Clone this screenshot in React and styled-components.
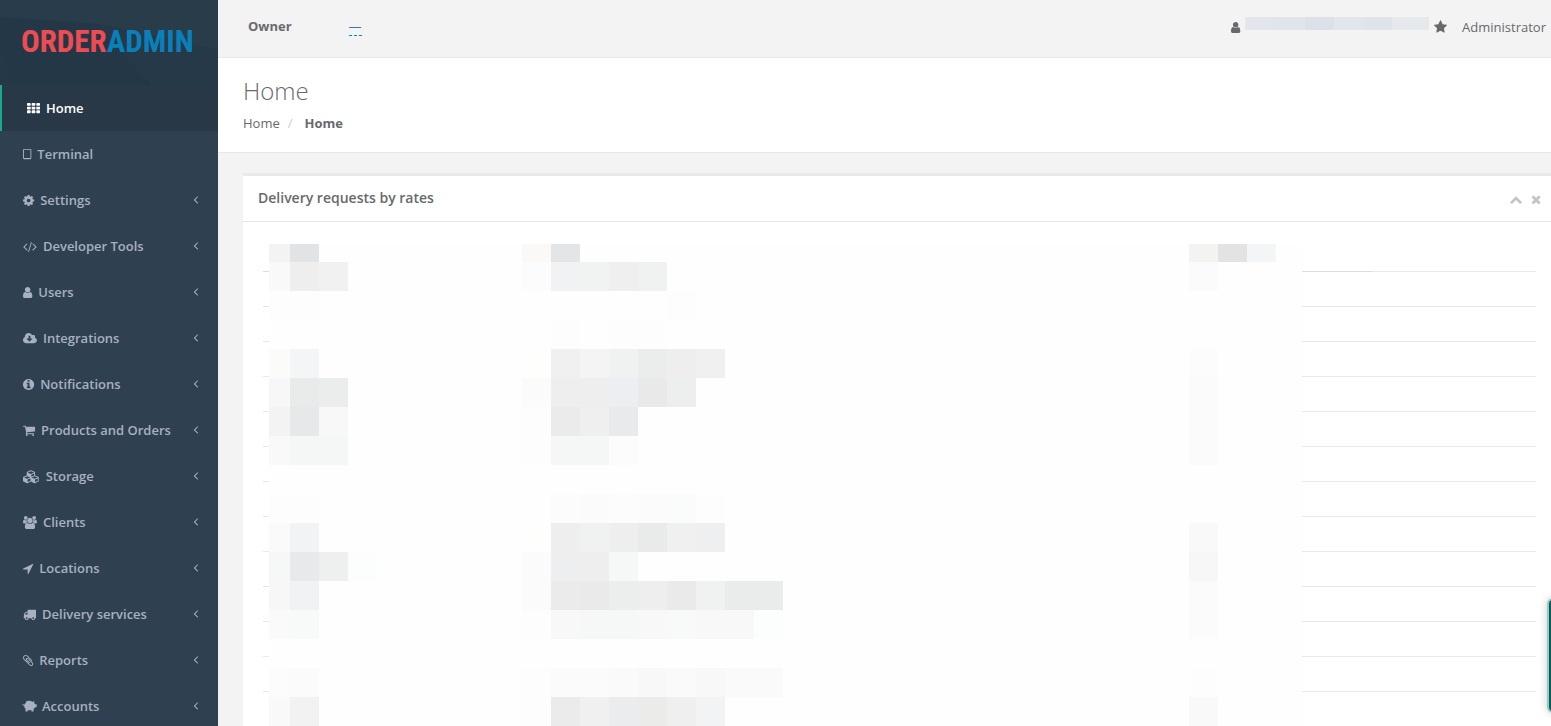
// Importing Packages
import React from "react";
import styled, { createGlobalStyle } from "styled-components";

// Icons: [left edge, width, path] on a 1792 unit high grid
const icons = {
  th: [0, 1792, "M512 1248v192q0 40-28 68t-68 28h-320q-40 0-68-28t-28-68v-192q0-40 28-68t68-28h320q40 0 68 28t28 68zm0-512v192q0 40-28 68t-68 28h-320q-40 0-68-28t-28-68v-192q0-40 28-68t68-28h320q40 0 68 28t28 68zm640 512v192q0 40-28 68t-68 28h-320q-40 0-68-28t-28-68v-192q0-40 28-68t68-28h320q40 0 68 28t28 68zm-640-1024v192q0 40-28 68t-68 28h-320q-40 0-68-28t-28-68v-192q0-40 28-68t68-28h320q40 0 68 28t28 68zm640 512v192q0 40-28 68t-68 28h-320q-40 0-68-28t-28-68v-192q0-40 28-68t68-28h320q40 0 68 28t28 68zm640 512v192q0 40-28 68t-68 28h-320q-40 0-68-28t-28-68v-192q0-40 28-68t68-28h320q40 0 68 28t28 68zm-640-1024v192q0 40-28 68t-68 28h-320q-40 0-68-28t-28-68v-192q0-40 28-68t68-28h320q40 0 68 28t28 68zm640 512v192q0 40-28 68t-68 28h-320q-40 0-68-28t-28-68v-192q0-40 28-68t68-28h320q40 0 68 28t28 68zm0-512v192q0 40-28 68t-68 28h-320q-40 0-68-28t-28-68v-192q0-40 28-68t68-28h320q40 0 68 28t28 68z"],
  tablet: [320, 1152, "M1344 1360v-1072q0-13-9.5-22.5t-22.5-9.5h-832q-13 0-22.5 9.5t-9.5 22.5v1072q0 13 9.5 22.5t22.5 9.5h832q13 0 22.5-9.5t9.5-22.5zm128-1072v1088q0 66-47 113t-113 47h-832q-66 0-113-47t-47-113v-1088q0-66 47-113t113-47h832q66 0 113 47t47 113z"],
  cog: [128, 1536, "M1152 896q0-106-75-181t-181-75-181 75-75 181 75 181 181 75 181-75 75-181zm512-109v222q0 12-8 23t-20 13l-185 28q-19 54-39 91 35 50 107 138 10 12 10 25t-9 23q-27 37-99 108t-94 71q-12 0-26-9l-138-108q-44 23-91 38-16 136-29 186-7 28-36 28h-222q-14 0-24.5-8.5t-11.5-21.5l-28-184q-49-16-90-37l-141 107q-10 9-25 9-14 0-25-11-126-114-165-168-7-10-7-23 0-12 8-23 15-21 51-66.5t54-70.5q-27-50-41-99l-183-27q-13-2-21-12.5t-8-23.5v-222q0-12 8-23t19-13l186-28q14-46 39-92-40-57-107-138-10-12-10-24 0-10 9-23 26-36 98.5-107.5t94.5-71.5q13 0 26 10l138 107q44-23 91-38 16-136 29-186 7-28 36-28h222q14 0 24.5 8.5t11.5 21.5l28 184q49 16 90 37l142-107q9-9 24-9 13 0 25 10 129 119 165 170 7 8 7 22 0 12-8 23-15 21-51 66.5t-54 70.5q26 50 41 98l183 28q13 2 21 12.5t8 23.5z"],
  code: [-64, 1920, "M553 1399l-50 50q-10 10-23 10t-23-10l-466-466q-10-10-10-23t10-23l466-466q10-10 23-10t23 10l50 50q10 10 10 23t-10 23l-393 393 393 393q10 10 10 23t-10 23zm591-1067l-373 1291q-4 13-15.5 19.5t-23.5 2.5l-62-17q-13-4-19.5-15.5t-2.5-24.5l373-1291q4-13 15.5-19.5t23.5-2.5l62 17q13 4 19.5 15.5t2.5 24.5zm657 651l-466 466q-10 10-23 10t-23-10l-50-50q-10-10-10-23t10-23l393-393-393-393q-10-10-10-23t10-23l50-50q10-10 23-10t23 10l466 466q10 10 10 23t-10 23z"],
  user: [256, 1280, "M1536 1399q0 109-62.5 187t-150.5 78h-854q-88 0-150.5-78t-62.5-187q0-85 8.5-160.5t31.5-152 58.5-131 94-89 134.5-34.5q131 128 313 128t313-128q76 0 134.5 34.5t94 89 58.5 131 31.5 152 8.5 160.5zm-256-887q0 159-112.5 271.5t-271.5 112.5-271.5-112.5-112.5-271.5 112.5-271.5 271.5-112.5 271.5 112.5 112.5 271.5z"],
  cloud: [-64, 1920, "M1216 928q0-14-9-23t-23-9h-224v-352q0-13-9.5-22.5t-22.5-9.5h-192q-13 0-22.5 9.5t-9.5 22.5v352h-224q-13 0-22.5 9.5t-9.5 22.5q0 14 9 23l352 352q9 9 23 9t23-9l351-351q10-12 10-24zm640 224q0 159-112.5 271.5t-271.5 112.5h-1088q-185 0-316.5-131.5t-131.5-316.5q0-130 70-240t188-165q-2-30-2-43 0-212 150-362t362-150q156 0 285.5 87t188.5 231q71-62 166-62 106 0 181 75t75 181q0 76-41 138 130 31 213.5 135.5t83.5 238.5z"],
  info: [128, 1536, "M1152 1376v-160q0-14-9-23t-23-9h-96v-512q0-14-9-23t-23-9h-320q-14 0-23 9t-9 23v160q0 14 9 23t23 9h96v320h-96q-14 0-23 9t-9 23v160q0 14 9 23t23 9h448q14 0 23-9t9-23zm-128-896v-160q0-14-9-23t-23-9h-192q-14 0-23 9t-9 23v160q0 14 9 23t23 9h192q14 0 23-9t9-23zm640 416q0 209-103 385.5t-279.5 279.5-385.5 103-385.5-103-279.5-279.5-103-385.5 103-385.5 279.5-279.5 385.5-103 385.5 103 279.5 279.5 103 385.5z"],
  cart: [64, 1664, "M704 1536q0 52-38 90t-90 38-90-38-38-90 38-90 90-38 90 38 38 90zm896 0q0 52-38 90t-90 38-90-38-38-90 38-90 90-38 90 38 38 90zm128-1088v512q0 24-16.5 42.5t-40.5 21.5l-1044 122q13 60 13 70 0 16-24 64h920q26 0 45 19t19 45-19 45-45 19h-1024q-26 0-45-19t-19-45q0-11 8-31.5t16-36 21.5-40 15.5-29.5l-177-823h-204q-26 0-45-19t-19-45 19-45 45-19h256q16 0 28.5 6.5t19.5 15.5 13 24.5 8 26 5.5 29.5 4.5 26h1201q26 0 45 19t19 45z"],
  cubes: [-128, 2304, "M512 1664l384-192v-314l-384 164v342zm-64-454l404-173-404-173-404 173zm1088 454l384-192v-314l-384 164v342zm-64-454l404-173-404-173-404 173zm-448-293l384-165v-266l-384 164v267zm-64-379l441-189-441-189-441 189zm1088 518v416q0 36-19 67t-52 47l-448 224q-25 14-57 14t-57-14l-448-224q-4-2-7-4-2 2-7 4l-448 224q-25 14-57 14t-57-14l-448-224q-33-16-52-47t-19-67v-416q0-38 21.5-70t56.5-48l434-186v-400q0-38 21.5-70t56.5-48l448-192q23-10 50-10t50 10l448 192q35 16 56.5 48t21.5 70v400l434 186q36 16 57 48t21 70z"],
  users: [0, 1920, "M593 896q-162 5-265 128h-134q-82 0-138-40.5t-56-118.5q0-353 124-353 6 0 43.5 21t97.5 42.5 119 21.5q67 0 133-23-5 37-5 66 0 139 81 256zm1071 637q0 120-73 189.5t-194 69.5h-874q-121 0-194-69.5t-73-189.5q0-53 3.5-103.5t14-109 26.5-108.5 43-97.5 62-81 85.5-53.5 111.5-20q10 0 43 21.5t73 48 107 48 135 21.5 135-21.5 107-48 73-48 43-21.5q61 0 111.5 20t85.5 53.5 62 81 43 97.5 26.5 108.5 14 109 3.5 103.5zm-1024-1277q0 106-75 181t-181 75-181-75-75-181 75-181 181-75 181 75 75 181zm704 384q0 159-112.5 271.5t-271.5 112.5-271.5-112.5-112.5-271.5 112.5-271.5 271.5-112.5 271.5 112.5 112.5 271.5zm576 225q0 78-56 118.5t-138 40.5h-134q-103-123-265-128 81-117 81-256 0-29-5-66 66 23 133 23 59 0 119-21.5t97.5-42.5 43.5-21q124 0 124 353zm-128-609q0 106-75 181t-181 75-181-75-75-181 75-181 181-75 181 75 75 181z"],
  location: [192, 1408, "M1593 349l-640 1280q-17 35-57 35-5 0-15-2-22-5-35.5-22.5t-13.5-39.5v-576h-576q-22 0-39.5-13.5t-22.5-35.5 4-42 29-30l1280-640q13-7 29-7 27 0 45 19 15 14 18.5 34.5t-6.5 39.5z"],
  truck: [0, 1792, "M640 1408q0-52-38-90t-90-38-90 38-38 90 38 90 90 38 90-38 38-90zm-384-512h384v-256h-158q-13 0-22 9l-195 195q-9 9-9 22v30zm1280 512q0-52-38-90t-90-38-90 38-38 90 38 90 90 38 90-38 38-90zm256-1088v1024q0 15-4 26.5t-13.5 18.5-16.5 11.5-23.5 6-22.5 2-25.5 0-22.5-.5q0 106-75 181t-181 75-181-75-75-181h-384q0 106-75 181t-181 75-181-75-75-181h-64q-3 0-22.5.5t-25.5 0-22.5-2-23.5-6-16.5-11.5-13.5-18.5-4-26.5q0-26 19-45t45-19v-320q0-8-.5-35t0-38 2.5-34.5 6.5-37 14-30.5 22.5-30l198-198q19-19 50.5-32t58.5-13h160v-192q0-26 19-45t45-19h1024q26 0 45 19t19 45z"],
  paperclip: [192, 1408, "M1596 1385q0 117-79 196t-196 79q-135 0-235-100l-777-776q-113-115-113-271 0-159 110-270t269-111q158 0 273 113l605 606q10 10 10 22 0 16-30.5 46.5t-46.5 30.5q-13 0-23-10l-606-607q-79-77-181-77-106 0-179 75t-73 181q0 105 76 181l776 777q63 63 145 63 64 0 106-42t42-106q0-82-63-145l-581-581q-26-24-60-24-29 0-48 19t-19 48q0 32 25 59l410 410q10 10 10 22 0 16-31 47t-47 31q-12 0-22-10l-410-410q-63-61-63-149 0-82 57-139t139-57q88 0 149 63l581 581q100 98 100 235z"],
  piggy: [0, 1792, "M-60 520Q60 660 190 650Q250 440 440 330L380 190Q640 70 960 90Q1180 110 1320 260Q1420 150 1560 140L1530 390Q1620 480 1660 590L1890 580V980L1680 1010Q1600 1150 1460 1240V1600H1160V1380Q880 1430 640 1370V1600H340V1220Q190 1090 160 820Q0 800-100 580Z"],
  angleLeft: [640, 640, "M1203 544q0 13-10 23l-393 393 393 393q10 10 10 23t-10 23l-50 50q-10 10-23 10t-23-10l-466-466q-10-10-10-23t10-23l466-466q10-10 23-10t23 10l50 50q10 10 10 23z"],
  star: [64, 1664, "M1728 647q0 22-26 48l-363 354 86 500q1 7 1 20 0 21-10.5 35.5t-30.5 14.5q-19 0-40-12l-449-236-449 236q-22 12-40 12-21 0-31.5-14.5t-10.5-35.5q0-6 2-20l86-500-364-354q-25-27-25-48 0-37 56-46l502-73 225-455q19-41 49-41t49 41l225 455 502 73q56 9 56 46z"],
  chevronUp: [64, 1664, "M1683 1331l-166 165q-19 19-45 19t-45-19l-531-531-531 531q-19 19-45 19t-45-19l-166-165q-19-19-19-45.5t19-45.5l742-741q19-19 45-19t45 19l742 741q19 19 19 45.5t-19 45.5z"],
  times: [192, 1408, "M1490 1322q0 40-28 68l-136 136q-28 28-68 28t-68-28l-294-294-294 294q-28 28-68 28t-68-28l-136-136q-28-28-28-68t28-68l294-294-294-294q-28-28-28-68t28-68l136-136q28-28 68-28t68 28l294 294 294-294q28-28 68-28t68 28l136 136q28 28 28 68t-28 68l-294 294 294 294q28 28 28 68z"],
};

// Data
const menu = [
  { label: "Home", icon: "th", active: true },
  { label: "Terminal", icon: "tablet" },
  { label: "Settings", icon: "cog", nested: true },
  { label: "Developer Tools", icon: "code", nested: true },
  { label: "Users", icon: "user", nested: true },
  { label: "Integrations", icon: "cloud", nested: true },
  { label: "Notifications", icon: "info", nested: true },
  { label: "Products and Orders", icon: "cart", nested: true },
  { label: "Storage", icon: "cubes", nested: true },
  { label: "Clients", icon: "users", nested: true },
  { label: "Locations", icon: "location", nested: true },
  { label: "Delivery services", icon: "truck", nested: true },
  { label: "Reports", icon: "paperclip", nested: true },
  { label: "Accounts", icon: "piggy", nested: true },
];

// Masked table data, one line per row: { first column: colours that follow }
const maskRows = [
  { 0: "f3f3f3 e2e3e5", 9: "faf9f7 e3e5e6", 32: "f3f3f1 e3e3e3 f3f5f7" },
  { 0: "f9f9f9 eeeeee f1f1f1", 9: "fcfcfd f0f2f3 f1f3f2 f0efef f0f2f1", 32: "fbfbfb" },
  { 0: "fdfdfd fdfdfd", 14: "fdfdfd" },
  { 10: "fdfdfd", 12: "fdfdfd fdfdfd" },
  { 0: "fbfbf9 f3f5f7", 9: "fefefc f0f0f0 f4f4f4 f0f2f1 ebedec eeeeee f0f0f0", 32: "fcfcfc" },
  { 0: "f6f7f6 e9ebea ebedec", 9: "fbfbfb eeeeee eeeeee edeef1 e9e9e9 edefee", 32: "fbfbfb" },
  { 0: "f3f3f3 e7e8ea f8f8f8", 9: "fdfdfd ebebeb eeefee e9eaec", 32: "fbfbfb" },
  { 0: "f8f9f8 f5f7f6 f5f7f6", 9: "fdfdfd f5f7f6 f5f7f6 fcfcfc", 32: "fbfbfb" },
  {},
  { 0: "fdfdfd fdfdfd", 10: "fcfcfc fbfbfb fcfcfc fbfbfb fafcfb fdfdfd" },
  { 0: "fafafa f1f3f5", 9: "fefefc eeeeee f0f2f1 eeeeee e9ebea f0f0f0 eeeff1", 32: "f9f9f9" },
  { 0: "f6f8f7 e8e9eb eef0ef fcfefe", 9: "fbfbfc edeef0 eeeeee f6f8f7", 32: "f7f7f7" },
  { 0: "f7f7f7 f0f2f4", 9: "fbfbfb ebebeb eaeaea eceeed eeeeee eaeaea f0f2f1 eaeceb eaeceb", 32: "fbfbfb" },
  { 0: "fafafa f8faf9", 9: "fdfdfd f8f8f8 f6f8f7 f6f8f7 f8f8f8 f8faf9 f8f8f8 f8f8f8 fcfefd", 32: "fbfbfb" },
  {},
  { 0: "fcfcfc fbfbfb", 9: "fdfdfd fbfbfb fbfbfb fafafa f8f8f8 fafafa f8f8f8 fafafa fafafa", 32: "fdfdfd" },
  { 0: "f9f9f9 f2f2f2", 9: "fdfdfd ebebeb f0f0f0 ebecee ebebe9 efefef f1f3f5", 32: "f9f9f9" },
];

const Icon = ({ name, size = 13 }) => {
  const [left, width, path] = icons[name];
  return (
    <StyledIcon
      aria-hidden="true"
      viewBox={`${left} 0 ${width} 1792`}
      width={(width / 1792) * size}
      height={size}
    >
      <path d={path} />
    </StyledIcon>
  );
};

const DataMask = () => (
  <StyledMask aria-hidden="true">
    <svg width="1033" height="482" shapeRendering="crispEdges">
      {maskRows.map((runs, row) =>
        Object.entries(runs).map(([start, colors]) =>
          colors.split(" ").map((color, i) => {
            const col = Number(start) + i;
            return (
              <rect
                key={`${row}-${col}`}
                x={col === 0 ? 0 : 21 + (col - 1) * 29}
                y={row === 0 ? 0 : 18 + (row - 1) * 29}
                width={col === 0 ? 21 : 29}
                height={row === 0 ? 18 : 29}
                fill={`#${color}`}
              />
            );
          })
        )
      )}
    </svg>
  </StyledMask>
);

const Sidebar = () => (
  <StyledSidebar>
    <StyledBrand href="#home">
      {/* Faceted backdrop behind the logo */}
      <svg viewBox="0 0 218 85" preserveAspectRatio="none" aria-hidden="true">
        <rect width="218" height="85" fill="#253847" />
        <path d="M0 0H126L98 24L0 17Z" fill="#283c4b" />
        <path d="M126 0H218V50L98 24Z" fill="#283c4a" />
        <path d="M98 24L150 85H12L0 40V17Z" fill="#243746" />
        <path d="M98 24L218 50V85H150Z" fill="#263948" />
      </svg>
      <StyledLogo>
        ORDER<span>ADMIN</span>
      </StyledLogo>
    </StyledBrand>
    <StyledMenu>
      {menu.map(({ label, icon, active, nested }) => (
        <li key={label}>
          <StyledMenuLink href="#menu" $active={active}>
            <Icon name={icon} />
            <span>{label}</span>
            {nested && (
              <StyledArrow>
                <Icon name="angleLeft" />
              </StyledArrow>
            )}
          </StyledMenuLink>
        </li>
      ))}
    </StyledMenu>
  </StyledSidebar>
);

const App = () => {
  return (
    <StyledPage>
      <GlobalStyle />
      <Sidebar />
      <StyledMain>
        <StyledTopbar>
          <StyledOwner>
            <strong>Owner</strong>
            <a href="#owner">—</a>
          </StyledOwner>
          <StyledAccount>
            <Icon name="user" />
            <StyledNameMask aria-hidden="true" />
            <Icon name="star" size={14} />
            <span>Administrator</span>
          </StyledAccount>
        </StyledTopbar>

        <StyledHeading>
          <h2>Home</h2>
          <ol>
            <li>
              <a href="#home">Home</a>
            </li>
            <li>
              <strong>Home</strong>
            </li>
          </ol>
        </StyledHeading>

        <StyledCard>
          <StyledCardTitle>
            <h5>Delivery requests by rates</h5>
            <StyledTools>
              <button type="button" aria-label="Collapse">
                <Icon name="chevronUp" />
              </button>
              <button type="button" aria-label="Close">
                <Icon name="times" />
              </button>
            </StyledTools>
          </StyledCardTitle>
          <StyledCardBody>
            <StyledTableWrap>
              <StyledTable>
                <thead>
                  <tr>
                    <th />
                    <th />
                    <th />
                    <td />
                  </tr>
                </thead>
                <tbody>
                  {Array.from({ length: 13 }, (_, i) => (
                    <tr key={i}>
                      <td />
                      <td />
                      <td />
                      <td />
                    </tr>
                  ))}
                </tbody>
              </StyledTable>
              <DataMask />
            </StyledTableWrap>
          </StyledCardBody>
        </StyledCard>
      </StyledMain>
      <StyledSideTab type="button" aria-label="Open chat" />
    </StyledPage>
  );
};

export default App;

const GlobalStyle = createGlobalStyle`
  * {
    box-sizing: border-box;
  }

  body {
    margin: 0;
    background: #f3f3f3;
    color: #676a6c;
    font-family: "Open Sans", "Noto Sans", sans-serif;
    font-size: 13px;
    line-height: 18px;
  }

  a {
    color: inherit;
    text-decoration: none;
  }
`;

const StyledPage = styled.div`
  display: flex;
  height: 100vh;
  overflow: hidden;
`;

const StyledIcon = styled.svg`
  flex: none;
  fill: currentColor;
  overflow: visible;
`;

const StyledSidebar = styled.nav`
  flex: none;
  width: 218px;
  background: #2f4050;
`;

const StyledBrand = styled.a`
  display: grid;
  height: 85px;
  align-items: center;

  > * {
    grid-area: 1 / 1;
  }

  svg {
    width: 100%;
    height: 100%;
  }
`;

const StyledLogo = styled.span`
  padding: 0 0 2px 21px;
  color: #ee4c55;
  font-family: "Roboto Condensed", Roboto, sans-serif;
  font-size: 31px;
  font-weight: 700;
  line-height: 36px;
  z-index: 1;

  span {
    color: #0980ba;
  }
`;

const StyledMenu = styled.ul`
  margin: 0;
  padding: 0;
  list-style: none;
`;

const StyledMenuLink = styled.a`
  display: flex;
  align-items: center;
  gap: 6px;
  height: 46px;
  padding: 0 19px 0 ${({ $active }) => ($active ? 25 : 23)}px;
  border-left: ${({ $active }) => ($active ? "2px solid #19aa8d" : "none")};
  background: ${({ $active }) => ($active ? "#293846" : "transparent")};
  color: ${({ $active }) => ($active ? "#fff" : "#a7b1c2")};
  font-weight: 600;
`;

const StyledArrow = styled.i`
  display: flex;
  margin-left: auto;
  padding-bottom: 2px;
`;

const StyledMain = styled.main`
  flex: 1;
  min-width: 0;
`;

const StyledTopbar = styled.header`
  display: flex;
  justify-content: space-between;
  height: 58px;
  padding: 17px 5px 0 30px;
  border-bottom: 1px solid #e7e7e7;
  background: #f3f3f3;
`;

const StyledOwner = styled.div`
  display: flex;
  align-items: flex-start;
  gap: 57px;

  a {
    border-bottom: 1px dashed #08c;
    color: #337ab7;
  }
`;

const StyledAccount = styled.div`
  display: flex;
  align-items: center;
  align-self: flex-start;
  gap: 5px;
  height: 20px;

  span {
    margin-left: 10px;
  }
`;

const StyledNameMask = styled.div`
  align-self: flex-start;
  width: 184px;
  height: 13px;
  background: linear-gradient(
    to right,
    #e7e8e8 2px,
    #e2e5eb 2px 31px,
    #e0e4eb 31px 60px,
    #dbe0e9 60px 89px,
    #e1e5ec 89px 118px,
    #dfe4eb 118px 147px,
    #e5e8ed 147px 176px,
    #e7e8e8 176px
  );
`;

const StyledHeading = styled.section`
  height: 95px;
  padding: 19px 25px 0;
  border-bottom: 1px solid #e7e7e7;
  background: #fff;

  h2 {
    margin: 0 0 10px;
    font-size: 24px;
    font-weight: 300;
    line-height: 27px;
  }

  ol {
    display: flex;
    margin: 0;
    padding: 0;
    list-style: none;
  }

  li + li::before {
    content: "/";
    padding: 0 12px 0 8px;
    color: #ccc;
  }
`;

const StyledCard = styled.section`
  margin: 20px 0 0 25px;
  border-top: 3px solid #e7eaec;
  background: #fff;
`;

const StyledCardTitle = styled.div`
  display: flex;
  align-items: center;
  justify-content: space-between;
  height: 46px;
  padding: 0 10px 2px 15px;
  border-bottom: 1px solid #e7eaec;

  h5 {
    margin: 0;
    font-size: 14px;
    font-weight: 600;
  }
`;

const StyledTools = styled.div`
  display: flex;
  gap: 9px;

  button {
    display: flex;
    padding: 3px 0 0;
    border: 0;
    background: none;
    color: #c4c4c4;
  }
`;

const StyledCardBody = styled.div`
  padding: 15px 15px 0 20px;
`;

const StyledTableWrap = styled.div`
  position: relative;
`;

const StyledTable = styled.table`
  width: 100%;
  border-collapse: separate;
  border-spacing: 0;
  table-layout: fixed;

  tr {
    height: 35px;
  }

  th,
  td {
    padding: 0;
    border-bottom: 1px solid #e7eaec;
  }

  th {
    border-color: #ddd;
  }

  thead td {
    width: 164px;
  }
`;

const StyledMask = styled.div`
  position: absolute;
  inset: 7px 234px 0 6px;
  overflow: hidden;
  background: #fefefe;
`;

const StyledSideTab = styled.button`
  position: fixed;
  right: -30px;
  bottom: 13px;
  width: 34px;
  height: 115px;
  border: 2px solid #9fc6c3;
  border-radius: 6px;
  background: #00625c;
  box-shadow: 0 0 8px rgba(0, 0, 0, 0.2);
`;
